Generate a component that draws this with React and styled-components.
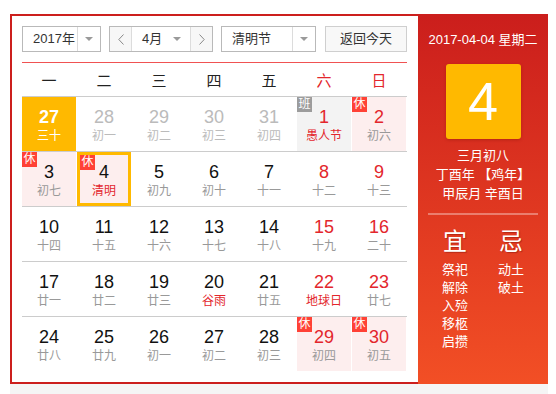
import React from "react";
import styled, { createGlobalStyle, css } from "styled-components";

const GlobalStyle = createGlobalStyle`
  body {
    margin: 0;
    background: #fff;
    font-family: "Liberation Sans", Arial, "Noto Sans CJK SC", sans-serif;
  }
`;

const Page = styled.div`
  padding: 14px 0 0 10px;
  width: 538px;
`;

const Calendar = styled.div`
  display: flex;
  height: 370px;
`;

const Main = styled.div`
  width: 385px;
  border: 2px solid #cc1f1d;
  border-right: none;
  padding: 10px 11px 11px 10px;
`;

const Toolbar = styled.div`
  display: flex;
  height: 26px;
  gap: 8px;
`;

const Select = styled.div`
  box-sizing: border-box;
  display: flex;
  width: ${({ $w }) => $w}px;
  height: 26px;
  border: 1px solid #b9b9b9;
  background: #fff;
  font-size: 13px;
  color: #333;
`;

const SelectText = styled.div`
  flex: 1;
  padding-left: 10px;
  line-height: 24px;
`;

const ArrowBox = styled.div`
  width: 22px;
  border-left: 1px solid #dcdcdc;
  display: flex;
  align-items: center;
  justify-content: center;
`;

const Caret = styled.span`
  width: 0;
  height: 0;
  border-left: 4px solid transparent;
  border-right: 4px solid transparent;
  border-top: 4px solid #9a9a9a;
`;

const StepBtn = styled.div`
  width: 21px;
  background: #f7f7f7;
  display: flex;
  align-items: center;
  justify-content: center;
  ${({ $side }) =>
    $side === "left"
      ? css`border-right: 1px solid #dcdcdc;`
      : css`border-left: 1px solid #dcdcdc;`}
`;

const MonthBox = styled.div`
  flex: 1;
  display: flex;
  align-items: center;
  justify-content: space-between;
  padding: 0 9px 0 10px;
  line-height: 24px;
`;

const TodayBtn = styled.div`
  box-sizing: border-box;
  margin-left: 1px;
  width: 82px;
  height: 26px;
  border: 1px solid #cfcfcf;
  background: #f8f8f8;
  font-size: 13px;
  color: #333;
  text-align: center;
  line-height: 24px;
`;

const RedRule = styled.div`
  margin-top: 10px;
  height: 1px;
  background: #f05252;
`;

const WeekHead = styled.div`
  display: grid;
  grid-template-columns: repeat(7, 54px);
  column-gap: 1px;
  height: 33px;
  align-items: center;
  text-align: center;
  font-size: 15px;
`;

const WeekDay = styled.div`
  color: ${({ $weekend }) => ($weekend ? "#e3262c" : "#222")};
`;

const Row = styled.div`
  display: grid;
  grid-template-columns: repeat(7, 54px);
  column-gap: 1px;
  border-top: 1px solid #cccccc;
`;

const cellBg = {
  normal: "#fff",
  rest: "#fdeeee",
  work: "#f3f3f3",
  selected: "#ffb900",
};

const Cell = styled.div`
  position: relative;
  box-sizing: border-box;
  height: 54px;
  padding-top: 9px;
  text-align: center;
  background: ${({ $kind }) => cellBg[$kind]};
  ${({ $today }) =>
    $today &&
    css`
      border: 3px solid #ffb900;
      padding-top: 6px;
    `}
`;

const Num = styled.div`
  font-size: 18px;
  line-height: 22px;
  font-weight: ${({ $bold }) => ($bold ? "bold" : "normal")};
  color: ${({ $c }) => $c};
`;

const Lunar = styled.div`
  font-size: 12px;
  line-height: 16px;
  color: ${({ $c }) => $c};
`;

const Badge = styled.span`
  position: absolute;
  top: 0;
  left: 0;
  width: 15px;
  height: 15px;
  font-size: 12px;
  line-height: 15px;
  text-align: center;
  color: #fff;
  background: ${({ $work }) => ($work ? "#9c9c9c" : "#ff4136")};
`;

const Panel = styled.div`
  width: 130px;
  display: flex;
  flex-direction: column;
  align-items: center;
  padding-top: 17px;
  box-sizing: border-box;
  color: #fff;
  background: linear-gradient(to bottom, #cb1e1c, #f24f25);
`;

const PanelDate = styled.div`
  font-size: 13px;
  line-height: 18px;
`;

const BigDay = styled.div`
  margin-top: 15px;
  width: 75px;
  height: 75px;
  border-radius: 3px;
  background: #ffb900;
  box-shadow: 0 1px 3px rgba(120, 20, 0, 0.35);
  font-size: 54px;
  line-height: 75px;
  text-align: center;
`;

const LunarInfo = styled.div`
  margin-top: 7px;
  font-size: 13px;
  line-height: 19px;
  text-align: center;
`;

const Divider = styled.div`
  margin-top: 10px;
  width: 110px;
  height: 2px;
  background: rgba(255, 255, 255, 0.35);
`;

const YiJi = styled.div`
  margin-top: 13px;
  display: grid;
  grid-template-columns: 50px 50px;
  column-gap: 6px;
  text-align: center;
`;

const YiJiHead = styled.div`
  font-size: 24px;
  line-height: 28px;
  text-shadow: 1px 1px 1px rgba(90, 0, 0, 0.35);
`;

const YiJiList = styled.div`
  margin-top: 5px;
  font-size: 13px;
  line-height: 18px;
`;

const Strip = styled.div`
  height: 10px;
  background: #f5f5f5;
`;

const Chevron = ({ dir }) => (
  <svg width="6" height="11" viewBox="0 0 6 11">
    <polyline
      points={dir === "left" ? "5.5,0.5 0.8,5.5 5.5,10.5" : "0.5,0.5 5.2,5.5 0.5,10.5"}
      fill="none"
      stroke="#888"
      strokeWidth="1"
    />
  </svg>
);

// kind: normal | rest | work | selected ; o: other month ; r: red lunar text
const weeks = [
  [
    { d: 27, l: "三十", kind: "selected", o: true },
    { d: 28, l: "初一", o: true },
    { d: 29, l: "初二", o: true },
    { d: 30, l: "初三", o: true },
    { d: 31, l: "初四", o: true },
    { d: 1, l: "愚人节", kind: "work", r: true },
    { d: 2, l: "初六", kind: "rest" },
  ],
  [
    { d: 3, l: "初七", kind: "rest" },
    { d: 4, l: "清明", kind: "rest", r: true, today: true },
    { d: 5, l: "初九" },
    { d: 6, l: "初十" },
    { d: 7, l: "十一" },
    { d: 8, l: "十二" },
    { d: 9, l: "十三" },
  ],
  [
    { d: 10, l: "十四" },
    { d: 11, l: "十五" },
    { d: 12, l: "十六" },
    { d: 13, l: "十七" },
    { d: 14, l: "十八" },
    { d: 15, l: "十九" },
    { d: 16, l: "二十" },
  ],
  [
    { d: 17, l: "廿一" },
    { d: 18, l: "廿二" },
    { d: 19, l: "廿三" },
    { d: 20, l: "谷雨", r: true },
    { d: 21, l: "廿五" },
    { d: 22, l: "地球日", r: true },
    { d: 23, l: "廿七" },
  ],
  [
    { d: 24, l: "廿八" },
    { d: 25, l: "廿九" },
    { d: 26, l: "初一" },
    { d: 27, l: "初二" },
    { d: 28, l: "初三" },
    { d: 29, l: "初四", kind: "rest" },
    { d: 30, l: "初五", kind: "rest" },
  ],
];

const weekNames = ["一", "二", "三", "四", "五", "六", "日"];

const DayCell = ({ day, col }) => {
  const kind = day.kind || "normal";
  const weekend = col >= 5;
  let numColor = weekend ? "#e3262c" : "#111";
  let lunarColor = day.r ? "#e3262c" : "#999";
  if (day.o) {
    numColor = "#bbb";
    lunarColor = "#bbb";
  }
  if (kind === "selected") {
    numColor = "#fff";
    lunarColor = "#fff";
  }
  return (
    <Cell $kind={kind} $today={day.today}>
      {kind === "rest" && <Badge>休</Badge>}
      {kind === "work" && <Badge $work>班</Badge>}
      <Num $c={numColor} $bold={kind === "selected"}>{day.d}</Num>
      <Lunar $c={lunarColor}>{day.l}</Lunar>
    </Cell>
  );
};

export default function App() {
  return (
    <Page>
      <GlobalStyle />
      <Calendar>
        <Main>
          <Toolbar>
            <Select $w={79}>
              <SelectText>2017年</SelectText>
              <ArrowBox>
                <Caret />
              </ArrowBox>
            </Select>
            <Select $w={104}>
              <StepBtn $side="left">
                <Chevron dir="left" />
              </StepBtn>
              <MonthBox>
                <span>4月</span>
                <Caret />
              </MonthBox>
              <StepBtn $side="right">
                <Chevron dir="right" />
              </StepBtn>
            </Select>
            <Select $w={95}>
              <SelectText>清明节</SelectText>
              <ArrowBox>
                <Caret />
              </ArrowBox>
            </Select>
            <TodayBtn>返回今天</TodayBtn>
          </Toolbar>
          <RedRule />
          <WeekHead>
            {weekNames.map((w, i) => (
              <WeekDay key={w} $weekend={i >= 5}>
                {w}
              </WeekDay>
            ))}
          </WeekHead>
          {weeks.map((week, wi) => (
            <Row key={wi}>
              {week.map((day, i) => (
                <DayCell key={i} day={day} col={i} />
              ))}
            </Row>
          ))}
        </Main>
        <Panel>
          <PanelDate>2017-04-04 星期二</PanelDate>
          <BigDay>4</BigDay>
          <LunarInfo>
            <div>三月初八</div>
            <div>丁酉年 【鸡年】</div>
            <div>甲辰月 辛酉日</div>
          </LunarInfo>
          <Divider />
          <YiJi>
            <YiJiHead>宜</YiJiHead>
            <YiJiHead>忌</YiJiHead>
            <YiJiList>
              <div>祭祀</div>
              <div>解除</div>
              <div>入殓</div>
              <div>移柩</div>
              <div>启攒</div>
            </YiJiList>
            <YiJiList>
              <div>动土</div>
              <div>破土</div>
            </YiJiList>
          </YiJi>
        </Panel>
      </Calendar>
      <Strip />
    </Page>
  );
}
